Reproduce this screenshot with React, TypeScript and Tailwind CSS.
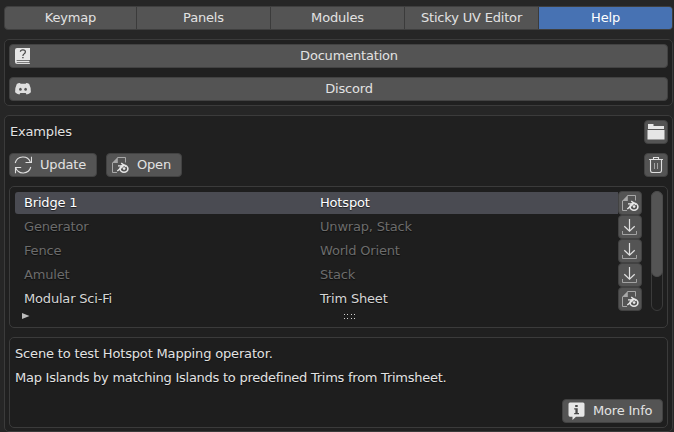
import type { ReactNode } from 'react';

function BookIcon() {
  return (
    <svg width="16" height="18" viewBox="0 0 16 18" className="shrink-0">
      <path d="M2 1H15V13H14.4V16.3H15V17H2.5Q0 17 0 14.5V3Q0 1 2 1Z" fill="#e6e6e6" />
      <path d="M1.6 13.5H15M1.8 15.6H15" stroke="#545454" strokeWidth="0.8" />
      <path d="M5.4 4.8Q5.4 2.8 7.9 2.8Q10.4 2.8 10.4 4.8Q10.4 6 9.2 6.8Q7.9 7.6 7.9 9" fill="none" stroke="#484848" strokeWidth="1.2" />
      <path d="M7.2 10H8.6V11.3H7.2Z" fill="#484848" />
    </svg>
  );
}

function DiscordIcon() {
  return (
    <svg width="16" height="12" viewBox="0 0 16 12" className="shrink-0">
      <path d="M5.2 0.3L4.8 0Q2.9 0.2 1.8 1Q0 4.3 0.1 9.3Q1.8 11.2 4.4 11.5L5.3 10.1H10.7L11.6 11.5Q14.2 11.2 15.9 9.3Q16 4.3 14.2 1Q13.1 0.2 11.2 0L10.7 0.8H5.6Z" fill="#dedede" />
      <ellipse cx="5.4" cy="6.2" rx="1.3" ry="1.5" fill="#545454" />
      <ellipse cx="10.6" cy="6.2" rx="1.3" ry="1.5" fill="#545454" />
    </svg>
  );
}

function RefreshIcon() {
  return (
    <svg width="18" height="18" viewBox="0 0 18 18" className="shrink-0" fill="none" stroke="#e0e0e0" strokeWidth="1.1">
      <path d="M1.2 7A8 8 0 0 1 16.4 6.2M16.8 11A8 8 0 0 1 1.6 11.8" />
      <path d="M17.5 0.8V6.5H11.5M1.5 17.2V11.5H7.2" />
    </svg>
  );
}

function BlendFileIcon() {
  return (
    <svg width="18" height="18" viewBox="0 0 18 18" className="shrink-0" fill="none">
      <path d="M6.5 1.5H14.5V6.5M1.5 7V16.5H6" stroke="#a8a8a8" strokeWidth="1" />
      <path d="M6.8 1V7H1Z" fill="#a8a8a8" />
      <ellipse cx="13" cy="12.7" rx="3.9" ry="3.5" stroke="#e6e6e6" strokeWidth="1.6" />
      <circle cx="13.1" cy="12.6" r="1.3" fill="#e6e6e6" />
      <path d="M7 9.9H13M6.3 15L11.8 10.4M10.2 7.2L15.2 10.6" stroke="#e6e6e6" strokeWidth="1.4" />
    </svg>
  );
}

function DownloadIcon() {
  return (
    <svg width="16" height="18" viewBox="0 0 16 18" className="shrink-0" fill="none">
      <path d="M7.5 1V13M2.3 8.2L7.5 13.2L12.7 8.2" stroke="#e0e0e0" strokeWidth="1.2" />
      <path d="M0.5 13V16.5H14.5V13" stroke="#a2a2a2" strokeWidth="1" />
    </svg>
  );
}

function FolderIcon() {
  return (
    <svg width="18" height="16" viewBox="0 0 18 16" className="shrink-0" fill="#e6e6e6">
      <path d="M1 0H6.5V2H17V5H1ZM0.5 6H17.5V15.5H0.5Z" />
    </svg>
  );
}

function TrashIcon() {
  return (
    <svg width="16" height="16" viewBox="0 0 16 16" className="shrink-0" fill="none" stroke="#e0e0e0">
      <path d="M1 2.5H15M5.5 2.5V0.5H10.5V2.5M2.5 3V13.5Q2.5 15.5 4.5 15.5H11.5Q13.5 15.5 13.5 13.5V3" strokeWidth="1.1" />
      <path d="M6.5 6V12M9.5 6V12" stroke="#a2a2a2" />
    </svg>
  );
}

function InfoIcon() {
  return (
    <svg width="17" height="18" viewBox="0 0 17 18" className="shrink-0">
      <path d="M2 0.5H15Q16.5 0.5 16.5 2V13Q16.5 14.7 15 14.7H8L4.5 18V14.7H2Q0.5 14.7 0.5 13V2Q0.5 0.5 2 0.5Z" fill="#e6e6e6" />
      <path d="M7.2 3H9.7V5H7.2ZM6.2 6.3H9.7V11H11V12.2H6.2V11H7.4V7.5H6.2Z" fill="#484848" />
    </svg>
  );
}

const surface = 'flex items-center rounded-[4px] border border-[#424242] bg-[#545454]';

function IconButton({ children }: { children: ReactNode }) {
  return <button className={`${surface} size-6 shrink-0 justify-center`}>{children}</button>;
}

function WideButton({ icon, label }: { icon: ReactNode; label: string }) {
  return (
    <button className={`${surface} h-6 w-full pl-[5px]`}>
      <span className="flex w-4 justify-center">{icon}</span>
      <span className="-mt-px flex-1 text-center">{label}</span>
    </button>
  );
}

const tabs = [
  { label: 'Keymap', width: 'w-[132px]' },
  { label: 'Panels', width: 'w-[134px]' },
  { label: 'Modules', width: 'w-[134px]' },
  { label: 'Sticky UV Editor', width: 'w-[134px]' },
  { label: 'Help', width: 'flex-1' },
];

const examples = [
  { name: 'Bridge 1', tag: 'Hotspot', local: true },
  { name: 'Generator', tag: 'Unwrap, Stack', local: false },
  { name: 'Fence', tag: 'World Orient', local: false },
  { name: 'Amulet', tag: 'Stack', local: false },
  { name: 'Modular Sci-Fi', tag: 'Trim Sheet', local: true },
];

export default function App() {
  return (
    <div className="h-[432px] w-[674px] overflow-hidden bg-[#262626] pt-1.5 pr-px pl-1 font-['DejaVu_Sans',sans-serif] text-[13px] leading-4 tracking-[-0.18px] text-[#e2e2e2] [text-shadow:0_1px_1px_rgba(0,0,0,0.6)]">
      <nav className="flex h-6 overflow-hidden rounded-[4px] border border-[#3f3f3f] bg-[#545454]">
        {tabs.map((tab, i) => (
          <button
            key={tab.label}
            className={`${tab.width} ${i === 4 ? 'bg-[#4772b3] text-white' : 'border-r border-[#3b3b3b]'}`}
          >
            {tab.label}
          </button>
        ))}
      </nav>

      <section className="mt-[9px] flex h-[67px] flex-col gap-[9px] rounded-[5px] border border-[#3b3b3b] bg-[#202020] p-1">
        <WideButton icon={<BookIcon />} label="Documentation" />
        <WideButton icon={<DiscordIcon />} label="Discord" />
      </section>

      <section className="mt-[9px] h-[317px] rounded-[5px] border border-[#3b3b3b] bg-[#202020] p-1">
        <header className="flex h-6 items-center justify-between">
          <h2 className="pl-px">Examples</h2>
          <IconButton><FolderIcon /></IconButton>
        </header>
        <div className="mt-[9px] flex gap-[9px]">
          <button className={`${surface} h-6 w-[88px] gap-2 pl-1`}>
            <RefreshIcon />
            <span className="-mt-px">Update</span>
          </button>
          <button className={`${surface} h-6 w-[76px] gap-2 pl-1`}>
            <BlendFileIcon />
            <span className="-mt-px">Open</span>
          </button>
          <div className="ml-auto"><IconButton><TrashIcon /></IconButton></div>
        </div>

        <div className="mt-[9px] h-[142px] rounded-[5px] border border-[#3b3b3b] bg-[#1e1e1e] pt-1 pr-1 pl-[5px]">
          <div className="flex justify-between">
            <ul className="w-[627px]">
              {examples.map((item, i) => (
                <li key={item.name} className="flex h-6 items-center">
                  <div
                    className={`flex h-[22px] flex-1 items-center rounded-l-[3px] pl-[9px] ${i === 0 ? 'bg-[#4a4b52] text-white' : item.local ? 'text-[#d6d6d6]' : 'text-[#6c6c6c]'}`}
                  >
                    <span className="-mt-px w-[296px]">{item.name}</span>
                    <span className="-mt-px">{item.tag}</span>
                  </div>
                  <IconButton>{item.local ? <BlendFileIcon /> : <DownloadIcon />}</IconButton>
                </li>
              ))}
            </ul>
            <div className="h-[120px] w-3 rounded-full border border-[#3b3b3b]">
              <div className="-mx-px -mt-px h-[86px] rounded-full border border-[#4a4a4a] bg-[#545454]" />
            </div>
          </div>
          <div className="-mt-px flex h-3 items-center pl-[7px]">
            <svg width="8" height="8" viewBox="0 0 8 8"><path d="M0 1L7.5 4L0 7Z" fill="#bcbcbc" /></svg>
            <svg width="14" height="8" viewBox="0 0 14 8" className="ml-[313px]" fill="#d4d4d4">
              {[1, 4, 8, 11].map((x) => (
                <path key={x} d={`M${x} 2h1v1h-1zM${x} 6h1v1h-1z`} />
              ))}
            </svg>
          </div>
        </div>

        <div className="mt-[9px] flex h-[91px] flex-col rounded-[5px] border border-[#3b3b3b] bg-[#1e1e1e] pt-2 pr-1 pb-1 pl-[5px]">
          <p className="tracking-[-0.16px]">Scene to test Hotspot Mapping operator.</p>
          <p className="mt-2 tracking-[-0.255px]">Map Islands by matching Islands to predefined Trims from Trimsheet.</p>
          <button className={`${surface} mt-auto ml-auto h-6 w-[101px] gap-2 pl-[5px]`}>
            <InfoIcon />
            <span className="-mt-px">More Info</span>
          </button>
        </div>
      </section>
    </div>
  );
}
